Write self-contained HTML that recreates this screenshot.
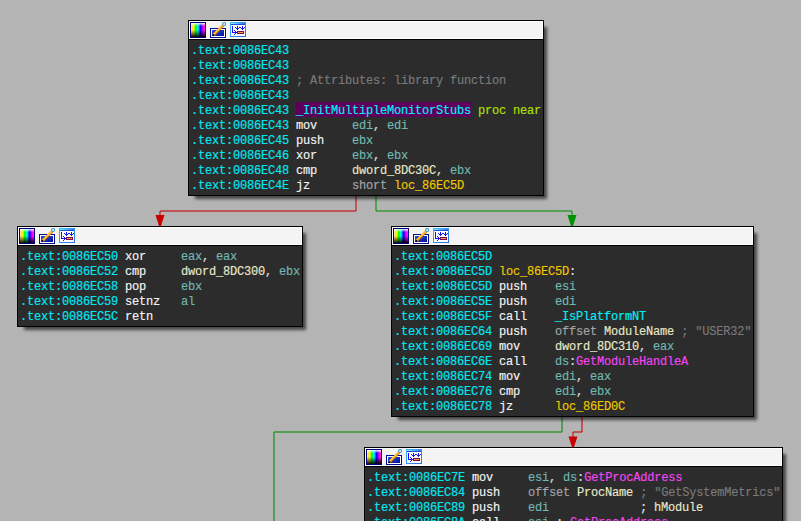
<!DOCTYPE html>
<html><head><meta charset="utf-8"><style>
html,body{margin:0;padding:0;}
body{width:801px;height:521px;overflow:hidden;background:#b4b4b4;position:relative;font-family:"Liberation Mono",monospace;}
.edges{position:absolute;left:0;top:0;}
.node{position:absolute;box-sizing:border-box;border:1px solid #000;background:#2c2c2c;box-shadow:5px 5px 3px -2px rgba(0,0,0,0.62);}
.tb{position:absolute;left:0;top:0;right:0;height:18px;background:#fff;border-bottom:1px solid #000;}
.tbi{position:absolute;left:1px;top:1px;right:1px;bottom:1px;background:#f4f4f4;}
.ic{position:absolute;left:1px;top:1px;}
.bd{position:absolute;left:0;right:0;top:19px;bottom:0;overflow:hidden;}
.hl{position:absolute;height:15px;background:#5c005c;}
.ln{position:absolute;left:2px;height:15px;line-height:15px;letter-spacing:-0.2px;font-size:12px;white-space:pre;color:#e0e0e0;-webkit-text-stroke:0.15px currentColor;}
</style></head><body>
<svg class="edges" width="801" height="521" viewBox="0 0 801 521"><line x1="356" y1="196" x2="356" y2="211" stroke="rgba(200,0,0,0.52)" stroke-width="2"/><line x1="356" y1="211" x2="160" y2="211" stroke="rgba(200,0,0,0.52)" stroke-width="2"/><line x1="160" y1="211" x2="160" y2="216" stroke="rgba(200,0,0,0.52)" stroke-width="2"/><line x1="376" y1="196" x2="376" y2="211" stroke="rgba(0,140,0,0.52)" stroke-width="2"/><line x1="376" y1="211" x2="572" y2="211" stroke="rgba(0,140,0,0.52)" stroke-width="2"/><line x1="572" y1="211" x2="572" y2="216" stroke="rgba(0,140,0,0.52)" stroke-width="2"/><line x1="562" y1="417" x2="562" y2="432" stroke="rgba(0,140,0,0.52)" stroke-width="2"/><line x1="562" y1="432" x2="274" y2="432" stroke="rgba(0,140,0,0.52)" stroke-width="2"/><line x1="274" y1="432" x2="274" y2="521" stroke="rgba(0,140,0,0.52)" stroke-width="2"/><line x1="582" y1="417" x2="582" y2="432" stroke="rgba(200,0,0,0.52)" stroke-width="2"/><line x1="582" y1="432" x2="573" y2="432" stroke="rgba(200,0,0,0.52)" stroke-width="2"/><line x1="573" y1="432" x2="573" y2="437" stroke="rgba(200,0,0,0.52)" stroke-width="2"/><path d="M155.5 215 H164.5 L161 226 H159 Z" fill="#c80000"/>
<path d="M567.5 215 H576.5 L573 226 H571 Z" fill="#009000"/>
<path d="M568.5 436.5 H577.5 L574 447 H572 Z" fill="#c80000"/>
</svg>
<div class="node" style="left:188px;top:20px;width:356px;height:176px"><div class="tb"><div class="tbi"></div><svg class="ic" width="56" height="16" viewBox="0 0 56 16">
<defs>
<linearGradient id="hue" x1="0" x2="1" y1="0" y2="0">
<stop offset="0" stop-color="#ff9000"/><stop offset="0.2" stop-color="#ffff00"/><stop offset="0.33" stop-color="#00ff00"/>
<stop offset="0.5" stop-color="#00ffff"/><stop offset="0.67" stop-color="#0000ff"/><stop offset="0.88" stop-color="#ff00ff"/><stop offset="1" stop-color="#ff20c0"/>
</linearGradient>
<linearGradient id="shade" x1="0" x2="0" y1="0" y2="1">
<stop offset="0" stop-color="#fff" stop-opacity="0.95"/><stop offset="0.22" stop-color="#fff" stop-opacity="0"/>
<stop offset="0.5" stop-color="#000" stop-opacity="0"/><stop offset="1" stop-color="#000" stop-opacity="0.95"/>
</linearGradient>
<linearGradient id="bl" x1="0" x2="1" y1="0" y2="1">
<stop offset="0" stop-color="#3050d0"/><stop offset="1" stop-color="#0010a0"/>
</linearGradient>
<linearGradient id="lw" x1="0" x2="1"><stop offset="0" stop-color="#fff" stop-opacity="0.85"/><stop offset="0.16" stop-color="#fff" stop-opacity="0"/></linearGradient>
</defs>
<rect x="0.5" y="0.5" width="15" height="15" fill="#000080" stroke="#000080"/>
<rect x="1" y="1" width="14" height="14" fill="url(#hue)"/>
<rect x="1" y="1" width="14" height="14" fill="url(#lw)"/>
<rect x="1" y="1" width="14" height="14" fill="url(#shade)"/>
<rect x="20.5" y="6.5" width="15" height="9" fill="#fff" stroke="#001090"/>
<rect x="22" y="8" width="12" height="6" fill="url(#bl)"/>
<path d="M23.6 13 L33.2 3.4" stroke="#e07800" stroke-width="2.6"/>
<path d="M23.1 12.5 L32.7 2.9" stroke="#ffcc10" stroke-width="1.1"/>
<path d="M23.9 12.7 L33 3.6" stroke="#fff8d8" stroke-width="0.9" stroke-dasharray="1 0.7"/>
<circle cx="34.1" cy="2" r="1.5" fill="#f4fcff" stroke="#3c98c0" stroke-width="1.1"/>
<path d="M22.7 13.7 L24.1 12.3" stroke="#000" stroke-width="1.4"/>
<g transform="translate(40,0)" shape-rendering="crispEdges">
<defs><linearGradient id="tt" x1="0" x2="1"><stop offset="0" stop-color="#80f8ff"/><stop offset="1" stop-color="#3070e8"/></linearGradient>
<linearGradient id="fr" x1="0" x2="1" y1="0" y2="1"><stop offset="0" stop-color="#40b8ff"/><stop offset="1" stop-color="#2a6ae0"/></linearGradient></defs>
<rect x="0" y="0" width="16" height="15" fill="url(#fr)"/>
<rect x="1" y="1" width="14" height="13" fill="#fff"/>
<rect x="1" y="1" width="14" height="1" fill="url(#tt)"/>
<rect x="1" y="2" width="14" height="1" fill="#2050d8"/>
<rect x="2" y="4" width="1" height="7" fill="#1414f0"/>
<rect x="2" y="10" width="5" height="1" fill="#1414f0"/>
<rect x="4" y="8" width="1" height="1" fill="#1414f0"/>
<rect x="5" y="9" width="1" height="1" fill="#1414f0"/>
<rect x="5" y="11" width="1" height="1" fill="#1414f0"/>
<rect x="4" y="12" width="1" height="1" fill="#1414f0"/>
<rect x="6" y="10" width="1" height="1" fill="#1414f0"/>
<rect x="5" y="5" width="1" height="1" fill="#1414f0"/>
<rect x="9" y="5" width="2" height="1" fill="#1414f0"/>
<rect x="14" y="5" width="1" height="1" fill="#1414f0"/>
<rect x="7" y="4" width="1" height="4" fill="#1414f0"/>
<rect x="6" y="6" width="1" height="1" fill="#1414f0"/>
<rect x="8" y="6" width="1" height="1" fill="#1414f0"/>
<rect x="12" y="4" width="1" height="4" fill="#1414f0"/>
<rect x="11" y="6" width="1" height="1" fill="#1414f0"/>
<rect x="13" y="6" width="1" height="1" fill="#1414f0"/>
<rect x="7" y="9" width="7" height="3" fill="#7a0850"/>
<rect x="8" y="10" width="5" height="1" fill="#ffa030"/>
</g>
</svg>
</div><div class="bd"><div class="hl" style="left:107px;top:62px;width:175px"></div><div class="ln" style="top:4px"><span style="color:#00e8f4">.text:0086EC43</span> </div><div class="ln" style="top:19px"><span style="color:#00e8f4">.text:0086EC43</span> </div><div class="ln" style="top:34px"><span style="color:#00e8f4">.text:0086EC43</span> <span style="color:#7a7a7a">; Attributes: library function</span></div><div class="ln" style="top:49px"><span style="color:#00e8f4">.text:0086EC43</span> </div><div class="ln" style="top:64px"><span style="color:#00e8f4">.text:0086EC43</span> <span style="color:#00f0f8">_InitMultipleMonitorStubs</span> <span style="color:#b0e000">proc near</span></div><div class="ln" style="top:79px"><span style="color:#00e8f4">.text:0086EC43</span> <span style="color:#f4f4f4">mov     </span><span style="color:#70b8b2">edi</span><span style="color:#e0e0e0">, </span><span style="color:#70b8b2">edi</span></div><div class="ln" style="top:94px"><span style="color:#00e8f4">.text:0086EC45</span> <span style="color:#f4f4f4">push    </span><span style="color:#70b8b2">ebx</span></div><div class="ln" style="top:109px"><span style="color:#00e8f4">.text:0086EC46</span> <span style="color:#f4f4f4">xor     </span><span style="color:#70b8b2">ebx</span><span style="color:#e0e0e0">, </span><span style="color:#70b8b2">ebx</span></div><div class="ln" style="top:124px"><span style="color:#00e8f4">.text:0086EC48</span> <span style="color:#f4f4f4">cmp     </span><span style="color:#e8e8c8">dword_8DC30C</span><span style="color:#e0e0e0">, </span><span style="color:#70b8b2">ebx</span></div><div class="ln" style="top:139px"><span style="color:#00e8f4">.text:0086EC4E</span> <span style="color:#f4f4f4">jz      </span><span style="color:#a4a6a8">short</span> <span style="color:#f0c800">loc_86EC5D</span></div></div></div><div class="node" style="left:17px;top:226px;width:286px;height:101px"><div class="tb"><div class="tbi"></div><svg class="ic" width="56" height="16" viewBox="0 0 56 16">
<defs>
<linearGradient id="hue" x1="0" x2="1" y1="0" y2="0">
<stop offset="0" stop-color="#ff9000"/><stop offset="0.2" stop-color="#ffff00"/><stop offset="0.33" stop-color="#00ff00"/>
<stop offset="0.5" stop-color="#00ffff"/><stop offset="0.67" stop-color="#0000ff"/><stop offset="0.88" stop-color="#ff00ff"/><stop offset="1" stop-color="#ff20c0"/>
</linearGradient>
<linearGradient id="shade" x1="0" x2="0" y1="0" y2="1">
<stop offset="0" stop-color="#fff" stop-opacity="0.95"/><stop offset="0.22" stop-color="#fff" stop-opacity="0"/>
<stop offset="0.5" stop-color="#000" stop-opacity="0"/><stop offset="1" stop-color="#000" stop-opacity="0.95"/>
</linearGradient>
<linearGradient id="bl" x1="0" x2="1" y1="0" y2="1">
<stop offset="0" stop-color="#3050d0"/><stop offset="1" stop-color="#0010a0"/>
</linearGradient>
<linearGradient id="lw" x1="0" x2="1"><stop offset="0" stop-color="#fff" stop-opacity="0.85"/><stop offset="0.16" stop-color="#fff" stop-opacity="0"/></linearGradient>
</defs>
<rect x="0.5" y="0.5" width="15" height="15" fill="#000080" stroke="#000080"/>
<rect x="1" y="1" width="14" height="14" fill="url(#hue)"/>
<rect x="1" y="1" width="14" height="14" fill="url(#lw)"/>
<rect x="1" y="1" width="14" height="14" fill="url(#shade)"/>
<rect x="20.5" y="6.5" width="15" height="9" fill="#fff" stroke="#001090"/>
<rect x="22" y="8" width="12" height="6" fill="url(#bl)"/>
<path d="M23.6 13 L33.2 3.4" stroke="#e07800" stroke-width="2.6"/>
<path d="M23.1 12.5 L32.7 2.9" stroke="#ffcc10" stroke-width="1.1"/>
<path d="M23.9 12.7 L33 3.6" stroke="#fff8d8" stroke-width="0.9" stroke-dasharray="1 0.7"/>
<circle cx="34.1" cy="2" r="1.5" fill="#f4fcff" stroke="#3c98c0" stroke-width="1.1"/>
<path d="M22.7 13.7 L24.1 12.3" stroke="#000" stroke-width="1.4"/>
<g transform="translate(40,0)" shape-rendering="crispEdges">
<defs><linearGradient id="tt" x1="0" x2="1"><stop offset="0" stop-color="#80f8ff"/><stop offset="1" stop-color="#3070e8"/></linearGradient>
<linearGradient id="fr" x1="0" x2="1" y1="0" y2="1"><stop offset="0" stop-color="#40b8ff"/><stop offset="1" stop-color="#2a6ae0"/></linearGradient></defs>
<rect x="0" y="0" width="16" height="15" fill="url(#fr)"/>
<rect x="1" y="1" width="14" height="13" fill="#fff"/>
<rect x="1" y="1" width="14" height="1" fill="url(#tt)"/>
<rect x="1" y="2" width="14" height="1" fill="#2050d8"/>
<rect x="2" y="4" width="1" height="7" fill="#1414f0"/>
<rect x="2" y="10" width="5" height="1" fill="#1414f0"/>
<rect x="4" y="8" width="1" height="1" fill="#1414f0"/>
<rect x="5" y="9" width="1" height="1" fill="#1414f0"/>
<rect x="5" y="11" width="1" height="1" fill="#1414f0"/>
<rect x="4" y="12" width="1" height="1" fill="#1414f0"/>
<rect x="6" y="10" width="1" height="1" fill="#1414f0"/>
<rect x="5" y="5" width="1" height="1" fill="#1414f0"/>
<rect x="9" y="5" width="2" height="1" fill="#1414f0"/>
<rect x="14" y="5" width="1" height="1" fill="#1414f0"/>
<rect x="7" y="4" width="1" height="4" fill="#1414f0"/>
<rect x="6" y="6" width="1" height="1" fill="#1414f0"/>
<rect x="8" y="6" width="1" height="1" fill="#1414f0"/>
<rect x="12" y="4" width="1" height="4" fill="#1414f0"/>
<rect x="11" y="6" width="1" height="1" fill="#1414f0"/>
<rect x="13" y="6" width="1" height="1" fill="#1414f0"/>
<rect x="7" y="9" width="7" height="3" fill="#7a0850"/>
<rect x="8" y="10" width="5" height="1" fill="#ffa030"/>
</g>
</svg>
</div><div class="bd"><div class="ln" style="top:4px"><span style="color:#00e8f4">.text:0086EC50</span> <span style="color:#f4f4f4">xor     </span><span style="color:#70b8b2">eax</span><span style="color:#e0e0e0">, </span><span style="color:#70b8b2">eax</span></div><div class="ln" style="top:19px"><span style="color:#00e8f4">.text:0086EC52</span> <span style="color:#f4f4f4">cmp     </span><span style="color:#e8e8c8">dword_8DC300</span><span style="color:#e0e0e0">, </span><span style="color:#70b8b2">ebx</span></div><div class="ln" style="top:34px"><span style="color:#00e8f4">.text:0086EC58</span> <span style="color:#f4f4f4">pop     </span><span style="color:#70b8b2">ebx</span></div><div class="ln" style="top:49px"><span style="color:#00e8f4">.text:0086EC59</span> <span style="color:#f4f4f4">setnz   </span><span style="color:#70b8b2">al</span></div><div class="ln" style="top:64px"><span style="color:#00e8f4">.text:0086EC5C</span> <span style="color:#f4f4f4">retn    </span></div></div></div><div class="node" style="left:391px;top:226px;width:363px;height:191px"><div class="tb"><div class="tbi"></div><svg class="ic" width="56" height="16" viewBox="0 0 56 16">
<defs>
<linearGradient id="hue" x1="0" x2="1" y1="0" y2="0">
<stop offset="0" stop-color="#ff9000"/><stop offset="0.2" stop-color="#ffff00"/><stop offset="0.33" stop-color="#00ff00"/>
<stop offset="0.5" stop-color="#00ffff"/><stop offset="0.67" stop-color="#0000ff"/><stop offset="0.88" stop-color="#ff00ff"/><stop offset="1" stop-color="#ff20c0"/>
</linearGradient>
<linearGradient id="shade" x1="0" x2="0" y1="0" y2="1">
<stop offset="0" stop-color="#fff" stop-opacity="0.95"/><stop offset="0.22" stop-color="#fff" stop-opacity="0"/>
<stop offset="0.5" stop-color="#000" stop-opacity="0"/><stop offset="1" stop-color="#000" stop-opacity="0.95"/>
</linearGradient>
<linearGradient id="bl" x1="0" x2="1" y1="0" y2="1">
<stop offset="0" stop-color="#3050d0"/><stop offset="1" stop-color="#0010a0"/>
</linearGradient>
<linearGradient id="lw" x1="0" x2="1"><stop offset="0" stop-color="#fff" stop-opacity="0.85"/><stop offset="0.16" stop-color="#fff" stop-opacity="0"/></linearGradient>
</defs>
<rect x="0.5" y="0.5" width="15" height="15" fill="#000080" stroke="#000080"/>
<rect x="1" y="1" width="14" height="14" fill="url(#hue)"/>
<rect x="1" y="1" width="14" height="14" fill="url(#lw)"/>
<rect x="1" y="1" width="14" height="14" fill="url(#shade)"/>
<rect x="20.5" y="6.5" width="15" height="9" fill="#fff" stroke="#001090"/>
<rect x="22" y="8" width="12" height="6" fill="url(#bl)"/>
<path d="M23.6 13 L33.2 3.4" stroke="#e07800" stroke-width="2.6"/>
<path d="M23.1 12.5 L32.7 2.9" stroke="#ffcc10" stroke-width="1.1"/>
<path d="M23.9 12.7 L33 3.6" stroke="#fff8d8" stroke-width="0.9" stroke-dasharray="1 0.7"/>
<circle cx="34.1" cy="2" r="1.5" fill="#f4fcff" stroke="#3c98c0" stroke-width="1.1"/>
<path d="M22.7 13.7 L24.1 12.3" stroke="#000" stroke-width="1.4"/>
<g transform="translate(40,0)" shape-rendering="crispEdges">
<defs><linearGradient id="tt" x1="0" x2="1"><stop offset="0" stop-color="#80f8ff"/><stop offset="1" stop-color="#3070e8"/></linearGradient>
<linearGradient id="fr" x1="0" x2="1" y1="0" y2="1"><stop offset="0" stop-color="#40b8ff"/><stop offset="1" stop-color="#2a6ae0"/></linearGradient></defs>
<rect x="0" y="0" width="16" height="15" fill="url(#fr)"/>
<rect x="1" y="1" width="14" height="13" fill="#fff"/>
<rect x="1" y="1" width="14" height="1" fill="url(#tt)"/>
<rect x="1" y="2" width="14" height="1" fill="#2050d8"/>
<rect x="2" y="4" width="1" height="7" fill="#1414f0"/>
<rect x="2" y="10" width="5" height="1" fill="#1414f0"/>
<rect x="4" y="8" width="1" height="1" fill="#1414f0"/>
<rect x="5" y="9" width="1" height="1" fill="#1414f0"/>
<rect x="5" y="11" width="1" height="1" fill="#1414f0"/>
<rect x="4" y="12" width="1" height="1" fill="#1414f0"/>
<rect x="6" y="10" width="1" height="1" fill="#1414f0"/>
<rect x="5" y="5" width="1" height="1" fill="#1414f0"/>
<rect x="9" y="5" width="2" height="1" fill="#1414f0"/>
<rect x="14" y="5" width="1" height="1" fill="#1414f0"/>
<rect x="7" y="4" width="1" height="4" fill="#1414f0"/>
<rect x="6" y="6" width="1" height="1" fill="#1414f0"/>
<rect x="8" y="6" width="1" height="1" fill="#1414f0"/>
<rect x="12" y="4" width="1" height="4" fill="#1414f0"/>
<rect x="11" y="6" width="1" height="1" fill="#1414f0"/>
<rect x="13" y="6" width="1" height="1" fill="#1414f0"/>
<rect x="7" y="9" width="7" height="3" fill="#7a0850"/>
<rect x="8" y="10" width="5" height="1" fill="#ffa030"/>
</g>
</svg>
</div><div class="bd"><div class="ln" style="top:4px"><span style="color:#00e8f4">.text:0086EC5D</span> </div><div class="ln" style="top:19px"><span style="color:#00e8f4">.text:0086EC5D</span> <span style="color:#f0c800">loc_86EC5D</span><span style="color:#e0e0e0">:</span></div><div class="ln" style="top:34px"><span style="color:#00e8f4">.text:0086EC5D</span> <span style="color:#f4f4f4">push    </span><span style="color:#70b8b2">esi</span></div><div class="ln" style="top:49px"><span style="color:#00e8f4">.text:0086EC5E</span> <span style="color:#f4f4f4">push    </span><span style="color:#70b8b2">edi</span></div><div class="ln" style="top:64px"><span style="color:#00e8f4">.text:0086EC5F</span> <span style="color:#f4f4f4">call    </span><span style="color:#00f0f8">_IsPlatformNT</span></div><div class="ln" style="top:79px"><span style="color:#00e8f4">.text:0086EC64</span> <span style="color:#f4f4f4">push    </span><span style="color:#a4a6a8">offset</span> <span style="color:#e8e8c8">ModuleName</span> <span style="color:#7a7a7a">; &quot;USER32&quot;</span></div><div class="ln" style="top:94px"><span style="color:#00e8f4">.text:0086EC69</span> <span style="color:#f4f4f4">mov     </span><span style="color:#e8e8c8">dword_8DC310</span><span style="color:#e0e0e0">, </span><span style="color:#70b8b2">eax</span></div><div class="ln" style="top:109px"><span style="color:#00e8f4">.text:0086EC6E</span> <span style="color:#f4f4f4">call    </span><span style="color:#70b8b2">ds</span><span style="color:#e0e0e0">:</span><span style="color:#f444f4">GetModuleHandleA</span></div><div class="ln" style="top:124px"><span style="color:#00e8f4">.text:0086EC74</span> <span style="color:#f4f4f4">mov     </span><span style="color:#70b8b2">edi</span><span style="color:#e0e0e0">, </span><span style="color:#70b8b2">eax</span></div><div class="ln" style="top:139px"><span style="color:#00e8f4">.text:0086EC76</span> <span style="color:#f4f4f4">cmp     </span><span style="color:#70b8b2">edi</span><span style="color:#e0e0e0">, </span><span style="color:#70b8b2">ebx</span></div><div class="ln" style="top:154px"><span style="color:#00e8f4">.text:0086EC78</span> <span style="color:#f4f4f4">jz      </span><span style="color:#f0c800">loc_86ED0C</span></div></div></div><div class="node" style="left:364px;top:447px;width:419px;height:114px"><div class="tb"><div class="tbi"></div><svg class="ic" width="56" height="16" viewBox="0 0 56 16">
<defs>
<linearGradient id="hue" x1="0" x2="1" y1="0" y2="0">
<stop offset="0" stop-color="#ff9000"/><stop offset="0.2" stop-color="#ffff00"/><stop offset="0.33" stop-color="#00ff00"/>
<stop offset="0.5" stop-color="#00ffff"/><stop offset="0.67" stop-color="#0000ff"/><stop offset="0.88" stop-color="#ff00ff"/><stop offset="1" stop-color="#ff20c0"/>
</linearGradient>
<linearGradient id="shade" x1="0" x2="0" y1="0" y2="1">
<stop offset="0" stop-color="#fff" stop-opacity="0.95"/><stop offset="0.22" stop-color="#fff" stop-opacity="0"/>
<stop offset="0.5" stop-color="#000" stop-opacity="0"/><stop offset="1" stop-color="#000" stop-opacity="0.95"/>
</linearGradient>
<linearGradient id="bl" x1="0" x2="1" y1="0" y2="1">
<stop offset="0" stop-color="#3050d0"/><stop offset="1" stop-color="#0010a0"/>
</linearGradient>
<linearGradient id="lw" x1="0" x2="1"><stop offset="0" stop-color="#fff" stop-opacity="0.85"/><stop offset="0.16" stop-color="#fff" stop-opacity="0"/></linearGradient>
</defs>
<rect x="0.5" y="0.5" width="15" height="15" fill="#000080" stroke="#000080"/>
<rect x="1" y="1" width="14" height="14" fill="url(#hue)"/>
<rect x="1" y="1" width="14" height="14" fill="url(#lw)"/>
<rect x="1" y="1" width="14" height="14" fill="url(#shade)"/>
<rect x="20.5" y="6.5" width="15" height="9" fill="#fff" stroke="#001090"/>
<rect x="22" y="8" width="12" height="6" fill="url(#bl)"/>
<path d="M23.6 13 L33.2 3.4" stroke="#e07800" stroke-width="2.6"/>
<path d="M23.1 12.5 L32.7 2.9" stroke="#ffcc10" stroke-width="1.1"/>
<path d="M23.9 12.7 L33 3.6" stroke="#fff8d8" stroke-width="0.9" stroke-dasharray="1 0.7"/>
<circle cx="34.1" cy="2" r="1.5" fill="#f4fcff" stroke="#3c98c0" stroke-width="1.1"/>
<path d="M22.7 13.7 L24.1 12.3" stroke="#000" stroke-width="1.4"/>
<g transform="translate(40,0)" shape-rendering="crispEdges">
<defs><linearGradient id="tt" x1="0" x2="1"><stop offset="0" stop-color="#80f8ff"/><stop offset="1" stop-color="#3070e8"/></linearGradient>
<linearGradient id="fr" x1="0" x2="1" y1="0" y2="1"><stop offset="0" stop-color="#40b8ff"/><stop offset="1" stop-color="#2a6ae0"/></linearGradient></defs>
<rect x="0" y="0" width="16" height="15" fill="url(#fr)"/>
<rect x="1" y="1" width="14" height="13" fill="#fff"/>
<rect x="1" y="1" width="14" height="1" fill="url(#tt)"/>
<rect x="1" y="2" width="14" height="1" fill="#2050d8"/>
<rect x="2" y="4" width="1" height="7" fill="#1414f0"/>
<rect x="2" y="10" width="5" height="1" fill="#1414f0"/>
<rect x="4" y="8" width="1" height="1" fill="#1414f0"/>
<rect x="5" y="9" width="1" height="1" fill="#1414f0"/>
<rect x="5" y="11" width="1" height="1" fill="#1414f0"/>
<rect x="4" y="12" width="1" height="1" fill="#1414f0"/>
<rect x="6" y="10" width="1" height="1" fill="#1414f0"/>
<rect x="5" y="5" width="1" height="1" fill="#1414f0"/>
<rect x="9" y="5" width="2" height="1" fill="#1414f0"/>
<rect x="14" y="5" width="1" height="1" fill="#1414f0"/>
<rect x="7" y="4" width="1" height="4" fill="#1414f0"/>
<rect x="6" y="6" width="1" height="1" fill="#1414f0"/>
<rect x="8" y="6" width="1" height="1" fill="#1414f0"/>
<rect x="12" y="4" width="1" height="4" fill="#1414f0"/>
<rect x="11" y="6" width="1" height="1" fill="#1414f0"/>
<rect x="13" y="6" width="1" height="1" fill="#1414f0"/>
<rect x="7" y="9" width="7" height="3" fill="#7a0850"/>
<rect x="8" y="10" width="5" height="1" fill="#ffa030"/>
</g>
</svg>
</div><div class="bd"><div class="ln" style="top:4px"><span style="color:#00e8f4">.text:0086EC7E</span> <span style="color:#f4f4f4">mov     </span><span style="color:#70b8b2">esi</span><span style="color:#e0e0e0">, </span><span style="color:#70b8b2">ds</span><span style="color:#e0e0e0">:</span><span style="color:#f444f4">GetProcAddress</span></div><div class="ln" style="top:19px"><span style="color:#00e8f4">.text:0086EC84</span> <span style="color:#f4f4f4">push    </span><span style="color:#a4a6a8">offset</span> <span style="color:#e8e8c8">ProcName</span> <span style="color:#7a7a7a">; &quot;GetSystemMetrics&quot;</span></div><div class="ln" style="top:34px"><span style="color:#00e8f4">.text:0086EC89</span> <span style="color:#f4f4f4">push    </span><span style="color:#70b8b2">edi</span>             <span style="color:#e0e0e0">; </span><span style="color:#e8e8c8">hModule</span></div><div class="ln" style="top:49px"><span style="color:#00e8f4">.text:0086EC8A</span> <span style="color:#f4f4f4">call    </span><span style="color:#70b8b2">esi</span> <span style="color:#e0e0e0">; </span><span style="color:#f444f4">GetProcAddress</span></div></div></div>
</body></html>
